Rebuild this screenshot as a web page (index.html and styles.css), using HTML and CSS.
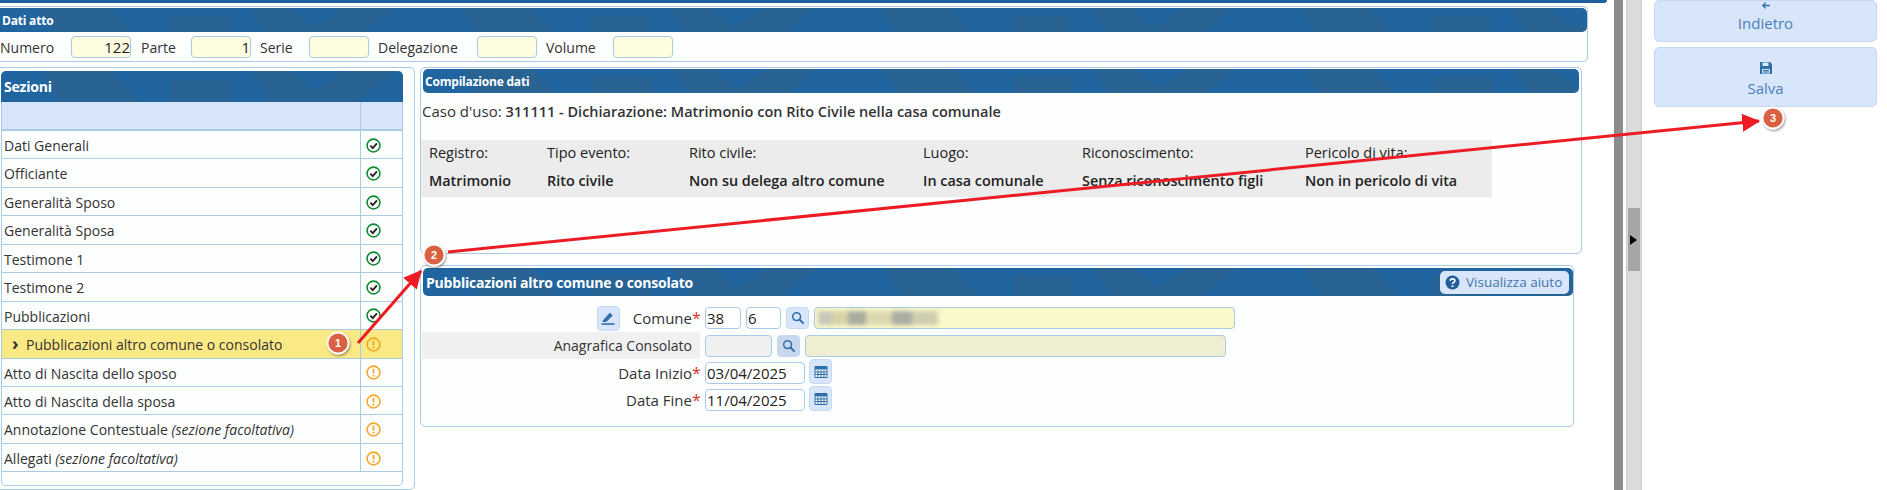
FILE: index.html
```html
<!DOCTYPE html>
<html lang="en">

<head>
  <meta charset="UTF-8" />
  <title>Pubblicazioni altro comune o consolato</title>
  <link rel="stylesheet" href="styles.css">
</head>

<body>
  <svg width="0" height="0" class="defs">
    <symbol id="ok" viewBox="0 0 14 14">
      <circle cx="7" cy="7" r="6" fill="none" stroke="#0c8a2e" stroke-width="1.5" />
      <path d="M4.1 7.2 6.3 9.4 10.2 5" fill="none" stroke="#222" stroke-width="1.7" />
    </symbol>
    <symbol id="warn" viewBox="0 0 14 14">
      <circle cx="7" cy="7" r="6" fill="none" stroke="#f5a623" stroke-width="1.5" />
      <path d="M7 3.4V8M7 9.2v1.6" fill="none" stroke="#f5a623" stroke-width="1.7" />
    </symbol>
    <symbol id="search" viewBox="0 0 14 14">
      <circle cx="5.6" cy="5.6" r="3.9" fill="none" stroke="#2f6ea8" stroke-width="1.5" />
      <path d="M8.5 8.5 12.6 12.6" stroke="#2f6ea8" stroke-width="2" />
    </symbol>
    <symbol id="calendar" viewBox="0 0 14 14">
      <path d="M1 1.5h12v11H1z" fill="#fff" stroke="#2f6ea8" />
      <path d="M1 1.5h12v3H1z" fill="#2f6ea8" />
      <path d="M1 7h12M1 9.5h12M4 5v7M7 5v7M10 5v7" stroke="#2f6ea8" />
    </symbol>
  </svg>

  <div class="page">
    <main class="main">
      <div class="top-bar"></div>

      <section class="panel atto">
        <h2 class="banner small">Dati atto</h2>
        <div class="atto-fields">
          <label class="lbl-numero">Numero</label><input class="cell" value="122">
          <label class="lbl-parte">Parte</label><input class="cell" value="1">
          <label class="lbl-serie">Serie</label><input class="cell">
          <label class="lbl-delega">Delegazione</label><input class="cell">
          <label class="lbl-volume">Volume</label><input class="cell">
        </div>
      </section>

      <div class="columns">
        <section class="panel sezioni">
          <div class="sezioni-inner">
            <h2 class="banner">Sezioni</h2>
            <div class="row head"><span></span><span class="state"></span></div>
            <div class="row"><span>Dati Generali</span><span class="state"><svg><use href="#ok" /></svg></span></div>
            <div class="row"><span>Officiante</span><span class="state"><svg><use href="#ok" /></svg></span></div>
            <div class="row"><span>Generalità Sposo</span><span class="state"><svg><use href="#ok" /></svg></span></div>
            <div class="row"><span>Generalità Sposa</span><span class="state"><svg><use href="#ok" /></svg></span></div>
            <div class="row"><span>Testimone 1</span><span class="state"><svg><use href="#ok" /></svg></span></div>
            <div class="row"><span>Testimone 2</span><span class="state"><svg><use href="#ok" /></svg></span></div>
            <div class="row"><span>Pubblicazioni</span><span class="state"><svg><use href="#ok" /></svg></span></div>
            <div class="row current"><span><b class="chevron">&rsaquo;</b>Pubblicazioni altro comune o consolato</span><span class="state"><svg><use href="#warn" /></svg></span></div>
            <div class="row"><span>Atto di Nascita dello sposo</span><span class="state"><svg><use href="#warn" /></svg></span></div>
            <div class="row"><span>Atto di Nascita della sposa</span><span class="state"><svg><use href="#warn" /></svg></span></div>
            <div class="row"><span>Annotazione Contestuale <i>(sezione facoltativa)</i></span><span class="state"><svg><use href="#warn" /></svg></span></div>
            <div class="row"><span>Allegati <i>(sezione facoltativa)</i></span><span class="state"><svg><use href="#warn" /></svg></span></div>
          </div>
        </section>

        <div class="content">
          <section class="panel compilazione">
            <h2 class="banner small">Compilazione dati</h2>
            <p class="caso">Caso d'uso: <b>311111 - Dichiarazione: Matrimonio con Rito Civile nella casa comunale</b></p>
            <div class="summary">
              <span>Registro:</span><span>Tipo evento:</span><span>Rito civile:</span><span>Luogo:</span><span>Riconoscimento:</span><span>Pericolo di vita:</span>
              <b>Matrimonio</b><b>Rito civile</b><b>Non su delega altro comune</b><b>In casa comunale</b><b>Senza riconoscimento figli</b><b>Non in pericolo di vita</b>
            </div>
          </section>

          <section class="panel pubblicazioni">
            <h2 class="banner with-button">Pubblicazioni altro comune o consolato
              <button class="help">
                <svg viewBox="0 0 14 14"><circle cx="7" cy="7" r="6.5" fill="#1f5f96" /><path d="M4.9 5.4C5 3 9.2 3 9.2 5.4 9.2 7 7 6.8 7 8.4" fill="none" stroke="#fff" stroke-width="1.6" /><path d="M7 9.6v1.7" stroke="#fff" stroke-width="1.7" /></svg>
                Visualizza aiuto
              </button>
            </h2>
            <div class="form-row first">
              <div class="form-label">
                <button class="tool"><svg viewBox="0 0 14 14"><path d="M1.8 9.4 8.8 1.8l3 2.6-6.6 6.6H1.8z" fill="#2f6ea8" /><path d="M0.5 13h13" stroke="#2f6ea8" stroke-width="1.6" /></svg></button>
                <label class="comune big">Comune<em>*</em></label>
              </div>
              <input class="field code" value="38">
              <input class="field code narrow" value="6">
              <button class="tool short"><svg><use href="#search" /></svg></button>
              <div class="field name blurred"><span class="smudge"></span></div>
            </div>
            <div class="form-row">
              <div class="form-label shaded"><label>Anagrafica Consolato</label></div>
              <input class="field consolato" disabled>
              <button class="tool short off"><svg><use href="#search" /></svg></button>
              <div class="field name off"></div>
            </div>
            <div class="form-row">
              <div class="form-label"><label class="big">Data Inizio<em>*</em></label></div>
              <input class="field date" value="03/04/2025">
              <button class="tool cal"><svg><use href="#calendar" /></svg></button>
            </div>
            <div class="form-row">
              <div class="form-label"><label class="big">Data Fine<em>*</em></label></div>
              <input class="field date" value="11/04/2025">
              <button class="tool cal"><svg><use href="#calendar" /></svg></button>
            </div>
          </section>
        </div>
      </div>
    </main>

    <div class="divider"></div>
    <div class="splitter"><div class="grip"><span class="grip-arrow"></span></div></div>

    <aside class="actions">
      <button class="action back">
        <svg viewBox="0 0 14 14"><path d="M13 7H2M6.5 2.5 2 7l4.5 4.5" fill="none" stroke="#2f6ea8" stroke-width="2" /></svg>
        Indietro
      </button>
      <button class="action">
        <svg viewBox="0 0 14 14"><path d="M1 1h10l2 2v10H1z" fill="#2f6ea8" /><path d="M3.5 1.5h6v3.5h-6zM3 8h8v4.5H3z" fill="#d8e6fb" /><path d="M4 9.5h6M4 11h6" stroke="#2f6ea8" /></svg>
        Salva
      </button>
    </aside>
  </div>

  <!-- callouts drawn over the page -->
  <svg class="callouts" width="1887" height="490">
    <defs>
      <marker id="head" markerWidth="7" markerHeight="7" refX="5.6" refY="3" orient="auto" markerUnits="strokeWidth">
        <path d="M0 0 6 3 0 6z" fill="#ed1c24" />
      </marker>
      <filter id="soft" x="-30%" y="-30%" width="170%" height="170%">
        <feDropShadow dx="1" dy="1.5" stdDeviation="1" flood-color="#000" flood-opacity=".4" />
      </filter>
    </defs>
    <path d="M358 343 421 271" stroke="#ed1c24" stroke-width="3" marker-end="url(#head)" />
    <path d="M448 252 1759 121" stroke="#ed1c24" stroke-width="3" marker-end="url(#head)" />
    <g class="badge">
      <circle cx="338" cy="343" r="10.5" />
      <text x="338" y="347">1</text>
    </g>
    <g class="badge">
      <circle cx="434" cy="255" r="10.5" />
      <text x="434" y="259">2</text>
    </g>
    <g class="badge">
      <circle cx="1773" cy="118" r="10.5" />
      <text x="1773" y="122">3</text>
    </g>
  </svg>
</body>

</html>
```

FILE: styles.css
```css
* { margin: 0; padding: 0; box-sizing: border-box; }
html, body { height: 490px; overflow: hidden; }
body {
  font-family: "Open Sans", "Liberation Sans", sans-serif;
  font-size: 14px;
  color: #333;
  background-color: #fff;
  position: relative;
}
.defs { position: absolute; }
.page { display: flex; height: 490px; }
.main { width: 1614px; flex: none; }
.top-bar {
  width: 1607px;
  height: 3px;
  background-color: #1f5f9b;
  border-radius: 0 0 5px 0;
}

/* panels and blue banners */
.panel {
  border: 1px solid #a9cbe6;
  border-radius: 5px;
  background-color: #fdfefe;
}
.banner {
  display: flex;
  align-items: center;
  justify-content: space-between;
  height: 28px;
  padding-left: 3px;
  color: #fff;
  font-size: 14px;
  font-weight: 700;
  letter-spacing: -0.2px;
  border-radius: 5px;
  background-color: #20659f;
  background-image: url("data:image/svg+xml,%3Csvg xmlns='http://www.w3.org/2000/svg' width='420' height='32'%3E%3Cpath d='M40 0h70l30 32H60zM170 8h60v24h-60zM250 0h40l24 20 30-20h50l-40 32H270z' fill='%23336288' fill-opacity='.45'/%3E%3C/svg%3E");
}
.banner.small { height: 24px; font-size: 12px; padding-left: 2px; }

/* dati atto */
.atto {
  width: 1588px;
  height: 56px;
  margin-top: 3px;
  padding-top: 1px;
  border-left: 0;
  border-radius: 0 5px 5px 0;
}
.atto .banner { border-radius: 0 5px 5px 0; }
.atto-fields {
  display: flex;
  align-items: center;
  height: 22px;
  margin-top: 4px;
}
.atto-fields label { flex: none; }
.lbl-numero { width: 71px; }
.lbl-parte { width: 50px; margin-left: 10px; }
.lbl-serie { width: 49px; margin-left: 9px; }
.lbl-delega { width: 99px; margin-left: 9px; }
.lbl-volume { width: 67px; margin-left: 9px; }
.cell {
  width: 60px;
  height: 22px;
  font: inherit;
  font-size: 15px;
  color: #222;
  text-align: right;
  border: 1px solid #a9cbe6;
  border-radius: 4px;
  background-color: #fffde0;
}

.columns { display: flex; align-items: flex-start; margin-top: 5px; }

/* sezioni list */
.sezioni {
  width: 415px;
  height: 423px;
  padding: 3px 0 0 1px;
  border-left: 0;
  border-radius: 0 5px 5px 0;
}
.sezioni-inner {
  width: 402px;
  height: 415px;
  border: 1px solid #a9cbe6;
  border-top: 0;
  border-radius: 5px;
}
.sezioni .banner { height: 31px; margin-right: -1px; margin-left: -1px; border-radius: 5px 5px 0 0; }
.row {
  display: flex;
  height: 28.45px;
  border-bottom: 1px solid #a9cbe6;
  color: #333;
}
.row > span:first-child {
  flex: 1;
  padding-left: 2px;
  line-height: 29px;
  white-space: pre;
}
.row i { font-style: italic; }
.state {
  flex: none;
  display: flex;
  align-items: center;
  width: 41px;
  margin-right: 1px;
  padding: 1px 0 0 5px;
  border-left: 1px solid #a9cbe6;
}
.state svg { width: 15px; height: 15px; }
.row.head { height: 29px; background-color: #d8e6fb; border-bottom-width: 2px; }
.row.current { background-color: #fbe985; }
.chevron {
  display: inline-block;
  width: 22px;
  padding-left: 8px;
  font-size: 18px;
  line-height: 1;
}

/* right column */
.content { flex: none; width: 1162px; margin-left: 5px; }
.compilazione { height: 187px; padding: 1px 2px 0 2px; }
.caso { margin: 9px 0 0 -1px; line-height: 19px; font-size: 15px; }
.caso b { font-weight: 600; font-size: 14.5px; }
.summary {
  display: grid;
  grid-template-columns: 118px 142px 234px 159px 223px 1fr;
  grid-template-rows: 24px 33px;
  align-items: center;
  width: 1071px;
  height: 57px;
  margin: 19px 0 0 -2px;
  padding-left: 8px;
  font-size: 14.5px;
  background-color: #ececec;
  color: #222;
}
.summary b { font-weight: 600; font-size: 14.4px; }

.pubblicazioni { width: 1154px; height: 162px; margin-top: 11px; padding: 2px 0 0 1px; }
.with-button { padding-right: 4px; margin-left: 1px; }
.help {
  display: flex;
  align-items: center;
  gap: 6px;
  width: 129px;
  height: 23px;
  padding-left: 5px;
  color: #3f76a8;
  font: 400 13.5px "Open Sans", sans-serif;
  letter-spacing: 0;
  border: 0;
  border-radius: 5px;
  background-color: #d8e6fb;
}
.help svg { width: 15px; height: 15px; }

.form-row {
  display: flex;
  align-items: center;
  gap: 5px;
  height: 27px;
}
.form-row.first { height: 28px; margin-top: 8px; }
.form-label {
  display: flex;
  align-items: center;
  justify-content: flex-end;
  width: 278px;
  height: 100%;
}
.form-label.shaded { background-color: #f0f0f0; }
.form-label label { padding-right: 8px; }
.form-label .big { font-size: 15px; }
.form-label em {
  display: inline-block;
  width: 8px;
  margin-right: -8px;
  color: #d9362c;
  font-size: 16px;
  line-height: 1;
  font-style: normal;
}
.comune { margin-left: 13px; }
.field {
  height: 22px;
  padding-left: 1px;
  font: inherit;
  font-size: 15px;
  color: #222;
  border: 1px solid #a9cbe6;
  border-radius: 4px;
  background-color: #fff;
}
.field.code { width: 36px; }
.field.narrow { width: 35px; }
.field.consolato { width: 67px; background-color: #f0f0f0; }
.field.date { width: 100px; }
.field.name { width: 421px; background-color: #f3f1d3; }
.field.off { background-color: #f0eed2; }
.blurred { background-color: #fbf8c9 !important; padding: 3px 0 0 3px; }
.smudge {
  display: block;
  width: 120px;
  height: 14px;
  filter: blur(2px);
  background: linear-gradient(90deg, #c8c8b8 0 12%, #d8d3a8 12% 25%, #a8aca0 25% 40%, #dcd8b0 40% 62%, #a9ada4 62% 78%, #cfcdb0 78% 100%);
}
.tool {
  flex: none;
  display: flex;
  align-items: center;
  justify-content: center;
  width: 23px;
  height: 25px;
  border: 1px solid #c6d9f1;
  border-radius: 4px;
  background-color: #d8e6fb;
}
.tool svg { width: 14px; height: 14px; }
.tool.short { height: 22px; }
.tool.off { background-color: #c9d8ec; }
.tool.cal { margin: -2px 0 0 -1px; }

/* right side */
.divider { width: 9px; flex: none; background-color: #8c8c8c; }
.splitter {
  flex: none;
  display: flex;
  align-items: center;
  width: 16px;
  margin: 0 12px 0 3px;
  background-color: #dcdcdc;
  border-left: 1px solid #ccc;
  border-right: 1px solid #ccc;
  padding: 0 1px;
}
.grip {
  display: flex;
  align-items: center;
  width: 12px;
  height: 63px;
  margin-bottom: 11px;
  background-color: #a6a6a6;
}
.grip-arrow {
  width: 0;
  height: 0;
  margin-left: 2px;
  border-left: 7px solid #000;
  border-top: 5px solid transparent;
  border-bottom: 5px solid transparent;
}
.actions {
  flex: none;
  display: flex;
  flex-direction: column;
  gap: 5px;
  width: 223px;
}
.action {
  display: flex;
  flex-direction: column;
  align-items: center;
  justify-content: center;
  gap: 3px;
  height: 60px;
  padding-top: 5px;
  color: #4a7fb5;
  font: 400 15px "Open Sans", sans-serif;
  border: 1px solid #c6d9f1;
  border-radius: 5px;
  background-color: #d8e6fb;
}
.action svg { width: 14px; height: 14px; }
.action.back { height: 42px; padding: 0 0 8px; justify-content: flex-end; }

/* callouts */
.callouts { position: absolute; top: 0; left: 0; pointer-events: none; }
.badge circle { fill: #d9603f; stroke: #fff; stroke-width: 1.8; filter: url(#soft); }
.badge text {
  fill: #fff;
  font: 700 11px "Liberation Sans", sans-serif;
  text-anchor: middle;
}
```
